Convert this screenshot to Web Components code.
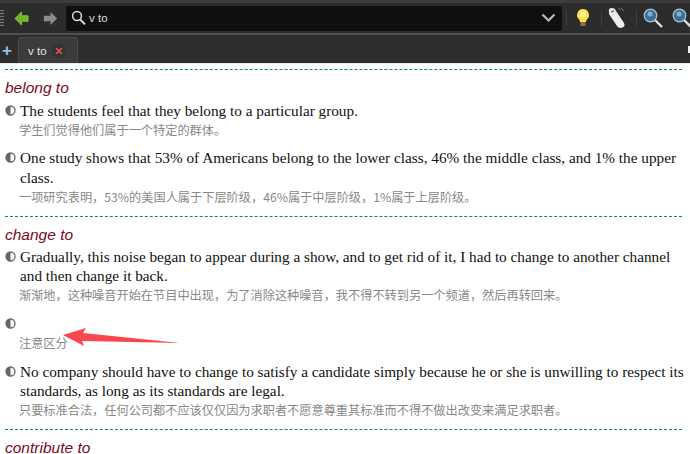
<!DOCTYPE html>
<html>
<head>
<meta charset="utf-8">
<style>
html, body { margin: 0; padding: 0; background: #fff; overflow: hidden; }
body { position: relative; width: 690px; height: 454px; font-family: "Liberation Serif", serif; }
</style>
</head>
<body>
<app-toolbar></app-toolbar>
<app-tabs></app-tabs>
<dict-page>
  <dict-rule></dict-rule>
  <dict-head>belong to</dict-head>
  <dict-sentence zh="学生们觉得他们属于一个特定的群体。">The students feel that they belong to a particular group.</dict-sentence>
  <dict-sentence zh="一项研究表明，53%的美国人属于下层阶级，46%属于中层阶级，1%属于上层阶级。">One study shows that 53% of Americans belong to the lower class, 46% the middle class, and 1% the upper class.</dict-sentence>
  <dict-rule></dict-rule>
  <dict-head>change to</dict-head>
  <dict-sentence zh="渐渐地，这种噪音开始在节目中出现，为了消除这种噪音，我不得不转到另一个频道，然后再转回来。">Gradually, this noise began to appear during a show, and to get rid of it, I had to change to another channel and then change it back.</dict-sentence>
  <dict-sentence zh="注意区分"></dict-sentence>
  <dict-sentence zh="只要标准合法，任何公司都不应该仅仅因为求职者不愿意尊重其标准而不得不做出改变来满足求职者。">No company should have to change to satisfy a candidate simply because he or she is unwilling to respect its standards, as long as its standards are legal.</dict-sentence>
  <dict-rule></dict-rule>
  <dict-head>contribute to</dict-head>
</dict-page>
<red-arrow></red-arrow>
<script>
const lens = `<circle cx="7.5" cy="7.5" r="6.3" fill="#3d6f99" stroke="#a8c4d8" stroke-width="1.2"/><circle cx="7" cy="6" r="2.5" fill="#7fb0d0"/><path d="M12 12l7 7" stroke="#ddd" stroke-width="2.4"/>`

const toolbarTpl = document.createElement('template')
toolbarTpl.innerHTML = `
<style>
:host { display: flex; align-items: center; height: 35px; box-sizing: border-box; background: #2c2c2c; border-top: 3px solid #3c3c3c; border-bottom: 2px solid #505050; overflow: hidden; }
.grip { width: 4px; height: 16px; margin-right: 10px; background: repeating-linear-gradient(#777 0 1px, #333 1px 3px); flex: none; }
svg { display: block; flex: none; }
.back { margin-right: 14px; }
.search { flex: none; width: 496px; height: 25px; margin-left: 8px; background: #0f0f0f; border-radius: 2px; display: flex; align-items: center; padding: 0 6px 0 5px; box-sizing: border-box; color: #ddd; font: 11.5px "Liberation Sans", sans-serif; }
.search span { margin-left: 3px; flex: 1; }
.sep { width: 1px; height: 16px; background: #3e3e3e; flex: none; }
</style>
<div class="grip"></div>
<svg class="back" width="15" height="15" viewBox="0 0 16 16"><path d="M8 1 L1 8 L8 15 V11 H15 V5 H8 Z" fill="#6fb52c" stroke="#9fe04e" stroke-width=".7"/></svg>
<svg width="15" height="15" viewBox="0 0 16 16"><path d="M8 1 L15 8 L8 15 V11 H1 V5 H8 Z" fill="#8c8c8c"/></svg>
<div class="search">
  <svg width="15" height="16" viewBox="0 0 15 16"><circle cx="6" cy="6" r="4.4" fill="none" stroke="#ddd" stroke-width="1.5"/><path d="M9.4 9.6 L14 14.4" stroke="#ddd" stroke-width="2"/></svg>
  <span>v to</span>
  <svg width="15" height="10" viewBox="0 0 15 10"><path d="M1.5 1.5 L7.5 7.5 L13.5 1.5" fill="none" stroke="#bbb" stroke-width="2.2"/></svg>
</div>
<div class="sep" style="margin-left:4px"></div>
<svg style="margin:0 11px 0 9px" width="14" height="20" viewBox="0 0 14 20"><path d="M7 1a6 6 0 0 1 3.4 10.9 L10 14H4l-.4-2.1A6 6 0 0 1 7 1Z" fill="#ffe14d"/><circle cx="7" cy="6.5" r="3" fill="#fff6a8"/><rect x="4.5" y="14" width="5" height="4" fill="#8a6d4a"/></svg>
<div class="sep"></div>
<svg style="margin:0 10px 0 6px" width="18" height="22" viewBox="0 0 18 22"><path d="M1 5 Q0 1 4 1 Q7 1 8 4 L16 16 Q18 20 13 21 Q10 21 9 19 L1 7Z" fill="#eee"/><path d="M3 5l3-1" stroke="#777" stroke-width="1.4" fill="none"/><path d="M10 1l3 2M13 1l3 3" stroke="#667788" stroke-width="1" fill="none"/></svg>
<div class="sep"></div>
<svg style="margin-left:6px" width="21" height="21" viewBox="0 0 21 21">${lens}</svg>
<svg style="margin-left:8px" width="21" height="21" viewBox="0 0 21 21">${lens}</svg>
`
customElements.define('app-toolbar', class extends HTMLElement {
  constructor () {
    super()
    this.attachShadow({ mode: 'open' }).appendChild(toolbarTpl.content.cloneNode(true))
  }
})

const tabsTpl = document.createElement('template')
tabsTpl.innerHTML = `
<style>
:host { display: flex; align-items: flex-end; height: 29px; box-sizing: border-box; background: #2d2d2d; border-bottom: 1px solid #e8e8e8; }
.plus { color: #8cc4ee; font: bold 17px "Liberation Sans", sans-serif; width: 18px; height: 24px; line-height: 24px; padding-right: 4px; box-sizing: border-box; text-align: center; flex: none; }
.tab { display: flex; align-items: center; box-sizing: border-box; width: 60px; height: 26px; background: #3b3b3b; border: 1px solid #484848; border-bottom: 0; border-radius: 3px 3px 0 0; padding-left: 9px; color: #e6e6e6; font: 11.5px "Liberation Sans", sans-serif; }
.x { width: 14px; height: 14px; margin-left: 5px; border-radius: 50%; background: #333; display: flex; align-items: center; justify-content: center; }
.end { margin: 0 0 10px auto; width: 2px; height: 7px; background: #eee; flex: none; }
</style>
<div class="plus">+</div>
<div class="tab">v to<span class="x"><svg width="8" height="8" viewBox="0 0 8 8"><path d="M1 1l6 6M7 1l-6 6" stroke="#e0564a" stroke-width="1.7"/></svg></span></div>
<div class="end"></div>
`
customElements.define('app-tabs', class extends HTMLElement {
  constructor () {
    super()
    this.attachShadow({ mode: 'open' }).appendChild(tabsTpl.content.cloneNode(true))
  }
})

const pageTpl = document.createElement('template')
pageTpl.innerHTML = `
<style>
:host { display: block; padding: 5px 5px 0 5px; height: 390px; box-sizing: border-box; overflow: hidden; background: #fff; }
</style>
<slot></slot>
`
customElements.define('dict-page', class extends HTMLElement {
  constructor () {
    super()
    this.attachShadow({ mode: 'open' }).appendChild(pageTpl.content.cloneNode(true))
  }
})

customElements.define('dict-rule', class extends HTMLElement {
  constructor () {
    super()
    this.attachShadow({ mode: 'open' }).innerHTML = `
<style>
:host { display: block; border-top: 1px dashed #0f7f86; margin-right: 3px; }
</style>`
  }
})

customElements.define('dict-head', class extends HTMLElement {
  constructor () {
    super()
    this.attachShadow({ mode: 'open' }).innerHTML = `
<style>
:host { display: block; height: 30.5px; font: italic 15.5px/36px "Liberation Sans", sans-serif; color: #7b0a1e; }
</style>
<slot></slot>`
  }
})

const sentenceTpl = document.createElement('template')
sentenceTpl.innerHTML = `
<style>
:host { display: grid; grid-template-columns: 15px 1fr; margin-bottom: 8.3px; }
svg { display: block; margin-top: 4px; }
.en { font: 15.25px/19.2px "Liberation Serif", serif; color: #111; min-height: 19.2px; }
.zh { font: 12.2px/19.4px "Noto Sans CJK SC", "Liberation Sans", sans-serif; color: #888; text-spacing-trim: space-all; margin: 1px 0 0 -1px; }
</style>
<svg width="11" height="11" viewBox="0 0 11 11"><circle cx="5.5" cy="5.5" r="4.5" fill="#fff" stroke="#666" stroke-width="1.3"/><path d="M5.5 1 A4.5 4.5 0 0 0 5.5 10Z" fill="#666"/></svg>
<div>
  <div class="en"><slot></slot></div>
  <div class="zh"></div>
</div>
`
customElements.define('dict-sentence', class extends HTMLElement {
  constructor () {
    super()
    this.attachShadow({ mode: 'open' }).appendChild(sentenceTpl.content.cloneNode(true))
  }

  connectedCallback () {
    this.shadowRoot.querySelector('.zh').textContent = this.getAttribute('zh')
  }
})

customElements.define('red-arrow', class extends HTMLElement {
  constructor () {
    super()
    this.attachShadow({ mode: 'open' }).innerHTML = `
<style>
:host { position: absolute; left: 60px; top: 325px; width: 125px; height: 25px; }
svg { display: block; }
</style>
<svg width="125" height="25" viewBox="0 0 125 25"><path d="M3 10 L26 3 L23 8 L120 18 L22 16 L24 21 Z" fill="#f8474f"/></svg>`
  }
})
</script>
</body>
</html>
